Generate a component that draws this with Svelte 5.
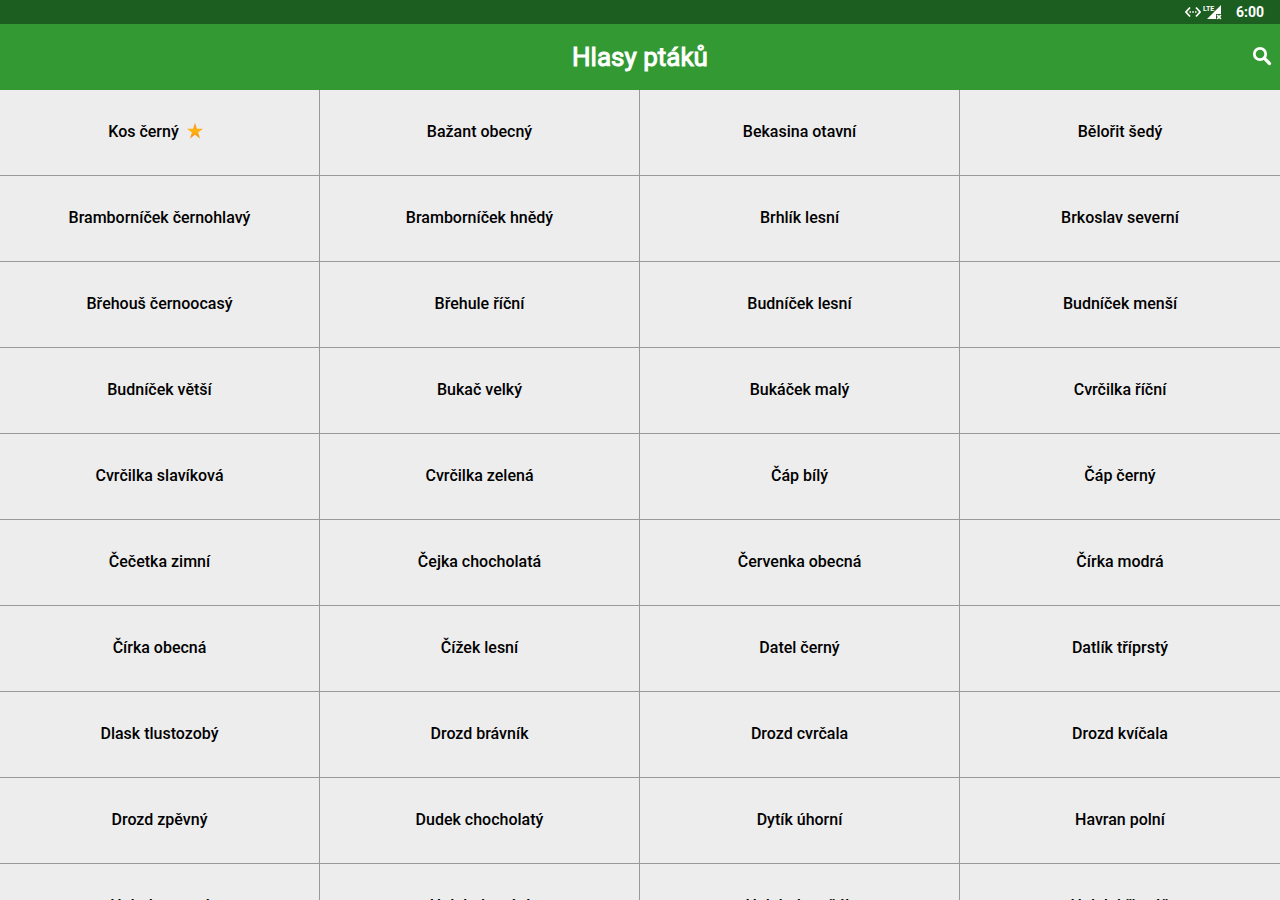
<script>
  const birds = [
    'Kos černý', 'Bažant obecný', 'Bekasina otavní', 'Bělořit šedý',
    'Bramborníček černohlavý', 'Bramborníček hnědý', 'Brhlík lesní', 'Brkoslav severní',
    'Břehouš černoocasý', 'Břehule říční', 'Budníček lesní', 'Budníček menší',
    'Budníček větší', 'Bukač velký', 'Bukáček malý', 'Cvrčilka říční',
    'Cvrčilka slavíková', 'Cvrčilka zelená', 'Čáp bílý', 'Čáp černý',
    'Čečetka zimní', 'Čejka chocholatá', 'Červenka obecná', 'Čírka modrá',
    'Čírka obecná', 'Čížek lesní', 'Datel černý', 'Datlík tříprstý',
    'Dlask tlustozobý', 'Drozd brávník', 'Drozd cvrčala', 'Drozd kvíčala',
    'Drozd zpěvný', 'Dudek chocholatý', 'Dytík úhorní', 'Havran polní',
    'Hohol severní', 'Holub domácí', 'Holub doupňák', 'Holub hřivnáč'
  ];
  const favourites = ['Kos černý'];
</script>

<div class="app">
  <div class="status">
    <svg width="16" height="12" viewBox="0 0 16 12" aria-hidden="true">
      <path d="M5 1.500 1 6l4 4.500M11 1.500 15 6l-4 4.500" fill="none" stroke="#fff" stroke-width="1.700" />
      <path d="M4.500 5.200h1.500v1.600H4.500zM7.200 5.200h1.600v1.600H7.200zM10 5.200h1.500v1.600H10z" fill="#fff" />
    </svg>
    <svg class="signal" width="20" height="16" viewBox="0 0 20 16">
      <path d="M19 1v9h-5v5H5z" fill="#fff" />
      <path d="M15 11h4v4h-4z" fill="#fff" opacity="0.350" />
      <path d="m15 11 4 4m0-4-4 4" stroke="#fff" stroke-width="1.400" />
      <text x="1" y="7">LTE</text>
    </svg>
    <time>6:00</time>
  </div>

  <header>
    <h1>Hlasy ptáků</h1>
    <button class="search" aria-label="Hledat">
      <svg width="20" height="20" viewBox="0 0 20 20" aria-hidden="true">
        <circle cx="8" cy="8" r="5.700" fill="none" stroke="#fff" stroke-width="2.800" />
        <path d="m12.200 12.200 5.300 5.300" stroke="#fff" stroke-width="3.200" stroke-linecap="round" />
      </svg>
    </button>
  </header>

  <main>
    {#each birds as bird}
      <button class="bird">
        <span>{bird}</span>
        {#if favourites.includes(bird)}
          <svg class="star" width="16" height="16" viewBox="0 0 16 16" aria-hidden="true">
            <defs>
              <linearGradient id="gold" x1="0" y1="0" x2="0" y2="1">
                <stop offset="0" stop-color="#f58a1c" />
                <stop offset="0.500" stop-color="#ffb510" />
                <stop offset="1" stop-color="#f58a1c" />
              </linearGradient>
            </defs>
            <path d="m8 0 1.900 5.700H16l-4.900 3.700L13 15.500l-5-3.700-5 3.700 1.900-6.100L0 5.700h6.100z" fill="url(#gold)" />
          </svg>
        {/if}
      </button>
    {/each}
  </main>
</div>

<style>
  :global(body) {
    margin: 0;
    background: #ededed;
  }
  .app {
    height: 100vh;
    display: flex;
    flex-direction: column;
    overflow: hidden;
    font-family: Roboto, sans-serif;
  }
  .status {
    flex: none;
    height: 24px;
    display: flex;
    align-items: center;
    justify-content: flex-end;
    padding-right: 16px;
    background: #1b5e20;
    color: #fff;
  }
  .signal {
    margin: 0 14px 0 1px;
  }
  .signal text {
    fill: #fff;
    font-family: "Liberation Sans Narrow", Roboto, sans-serif;
    font-size: 7px;
    font-weight: 700;
  }
  time {
    font-size: 14px;
    line-height: 24px;
    font-weight: 700;
  }
  header {
    flex: none;
    height: 66px;
    display: grid;
    grid-template-columns: 1fr auto 1fr;
    align-items: center;
    background: #339933;
    color: #fff;
  }
  h1 {
    grid-column: 2;
    margin: 0;
    font-size: 26px;
    line-height: 32px;
    font-weight: 400;
    -webkit-text-stroke: 1px currentColor;
  }
  button {
    border: 0;
    padding: 0;
    background: none;
    font: inherit;
    color: inherit;
  }
  .search {
    justify-self: end;
    display: flex;
    padding: 8px 8px 10px;
  }
  main {
    flex: 1;
    min-height: 0;
    display: grid;
    grid-template-columns: repeat(4, 1fr);
    grid-auto-rows: 86px;
    overflow: hidden;
  }
  .bird {
    display: flex;
    align-items: center;
    justify-content: center;
    gap: 8px;
    padding-bottom: 2px;
    border-right: 1px solid #999;
    border-bottom: 1px solid #999;
    background: #ededed;
    color: #000;
    font-size: 16px;
    line-height: 20px;
    font-weight: 500;
  }
  .bird:nth-child(4n) {
    border-right: 0;
  }
  .star {
    margin: 0 8px 2px 0;
  }
</style>
